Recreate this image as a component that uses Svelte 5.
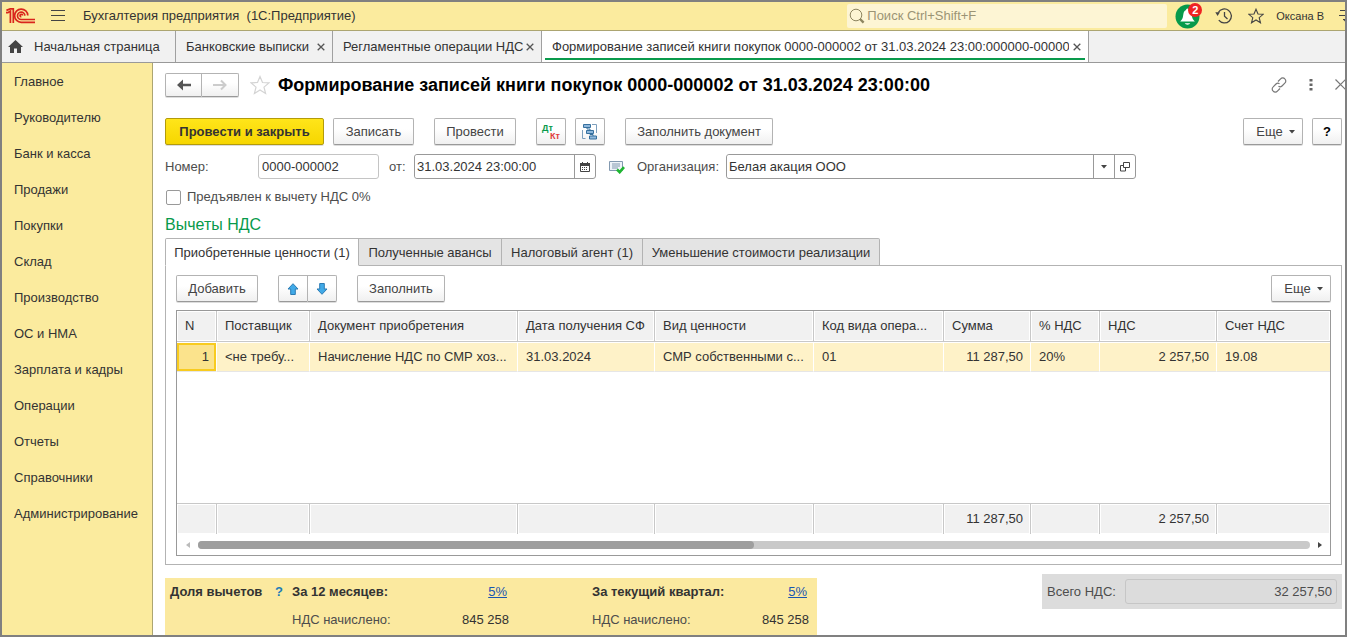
<script lang="ts">
  type Column = {
    title: string;
    width: number;
    value: string;
    total?: string;
    numeric?: boolean;
  };

  const sections = [
    'Главное',
    'Руководителю',
    'Банк и касса',
    'Продажи',
    'Покупки',
    'Склад',
    'Производство',
    'ОС и НМА',
    'Зарплата и кадры',
    'Операции',
    'Отчеты',
    'Справочники',
    'Администрирование'
  ];

  const columns: Column[] = [
    { title: 'N', width: 40, value: '1', numeric: true },
    { title: 'Поставщик', width: 93, value: '<не требу...' },
    { title: 'Документ приобретения', width: 208, value: 'Начисление НДС по СМР хоз...' },
    { title: 'Дата получения СФ', width: 137, value: '31.03.2024' },
    { title: 'Вид ценности', width: 159, value: 'СМР собственными с...' },
    { title: 'Код вида опера...', width: 130, value: '01' },
    { title: 'Сумма', width: 87, value: '11 287,50', total: '11 287,50', numeric: true },
    { title: '% НДС', width: 69, value: '20%' },
    { title: 'НДС', width: 117, value: '2 257,50', total: '2 257,50', numeric: true },
    { title: 'Счет НДС', width: 0, value: '19.08' }
  ];

  const pages = [
    'Приобретенные ценности (1)',
    'Полученные авансы',
    'Налоговый агент (1)',
    'Уменьшение стоимости реализации'
  ];

  const shares = [
    { period: 'За 12 месяцев:', percent: '5%', accrued: '845 258' },
    { period: 'За текущий квартал:', percent: '5%', accrued: '845 258' }
  ];

  let activePage = $state(0);
  let zeroRate = $state(false);
  let docNumber = $state('0000-000002');
  let docDate = $state('31.03.2024 23:00:00');
  let organization = $state('Белая акация ООО');
</script>

{#snippet cross()}
  <svg width="8" height="8" viewBox="0 0 8 8"><path d="M.7.7l6.6 6.6M7.3.7L.7 7.3" stroke="#555" stroke-width="1.3" /></svg>
{/snippet}

{#snippet caret()}
  <svg width="6" height="4" viewBox="0 0 6 4"><path d="M0 0h6L3 3.5z" fill="#444" /></svg>
{/snippet}

<div class="window">
  <header class="topbar">
    <svg class="logo" width="30" height="16" viewBox="0 0 30 16" fill="none" stroke="#d9251c" stroke-width="1.7">
      <path d="M0 4.600h1.900L4.400 3V15" />
      <path d="M.4 2.400L4.200 .9H7.300V15" />
      <path d="M21.800 7.600A6.600 6.600 0 1 0 15.300 14.300H29" />
      <path d="M18.900 7.600A3.700 3.700 0 1 0 15.300 11.500H29" />
      <path d="M16.600 7.600A1.300 1.300 0 1 0 15.300 8.900" />
    </svg>
    <button class="icon" aria-label="Меню">
      <svg width="14" height="12" viewBox="0 0 14 12"><path d="M0 .5h14M0 5.5h14M0 10.5h14" stroke="#444" /></svg>
    </button>
    <span class="app-name">Бухгалтерия предприятия&nbsp; (1С:Предприятие)</span>
    <label class="search">
      <svg width="16" height="16" viewBox="0 0 16 16" fill="none" stroke="#8d8560">
        <circle cx="7" cy="7" r="5.8" />
        <path d="M11 11l3.6 3.6" stroke-width="2.4" />
      </svg>
      <input type="search" placeholder="Поиск Ctrl+Shift+F" aria-label="Поиск" />
    </label>
    <button class="icon bell" aria-label="Оповещения">
      <svg width="25" height="25" viewBox="0 0 25 25">
        <circle cx="12.5" cy="12.5" r="12" fill="#079a4b" />
        <path d="M12.5 4.5c-1 0-1.4.8-1.4 1.6C8.5 7 8.5 10 8 12.5c-.4 2-1.2 3.500-2.800 5h14.600c-1.600-1.500-2.400-3-2.800-5-.5-2.500-.5-5.500-3.100-6.400 0-.8-.4-1.600-1.400-1.600zM9.700 19.300a3 2.200 0 0 0 5.600 0z" fill="#fff" />
      </svg>
      <span class="badge">2</span>
    </button>
    <button class="icon" aria-label="История">
      <svg width="18" height="16" viewBox="0 0 18 16" fill="none" stroke="#444" stroke-width="1.3">
        <path d="M3.300 4.500A7 7 0 1 1 3.800 12.200" />
        <path d="M9.500 4v4.300l3 2.600" />
        <path d="M.3 4.300h4.600L2.600 8z" fill="#444" stroke="none" />
      </svg>
    </button>
    <button class="icon" aria-label="Избранное">
      <svg width="16" height="16" viewBox="0 0 16 16"><path d="M8 1.200l2 4.800 5.200.3-4 3.400 1.300 5.100L8 12l-4.500 2.800 1.300-5.100-4-3.400L6 6z" fill="none" stroke="#444" stroke-width="1.100" /></svg>
    </button>
    <span class="user">Оксана В</span>
    <button class="icon" aria-label="Настройки">
      <svg width="14" height="14" viewBox="0 0 14 14"><path d="M1 1.500h12M0 6.500h14M4 10.500h8" stroke="#444" /><path d="M4 10.500h6l-3 3z" fill="#444" /></svg>
    </button>
  </header>

  <nav class="tabs" aria-label="Открытые окна">
    <div class="tab home">
      <svg width="15" height="13" viewBox="0 0 15 13"><path d="M7.500 0L0 7h2v6h4V8.500h3V13h4V7h2z" fill="#444" /></svg>
      <span>Начальная страница</span>
    </div>
    <div class="tab bank"><span>Банковские выписки</span><button class="icon" aria-label="Закрыть">{@render cross()}</button></div>
    <div class="tab routine"><span>Регламентные операции НДС</span><button class="icon" aria-label="Закрыть">{@render cross()}</button></div>
    <div class="tab current">
      <span>Формирование записей книги покупок 0000-000002 от 31.03.2024 23:00:000000-000002</span>
      <button class="icon" aria-label="Закрыть">{@render cross()}</button>
    </div>
  </nav>

  <div class="body">
    <nav class="sections" aria-label="Разделы">
      {#each sections as section}
        <a href="#section">{section}</a>
      {/each}
    </nav>

    <main>
      <div class="title-row">
        <div class="pair">
          <button class="btn" aria-label="Назад">
            <svg width="16" height="12" viewBox="0 0 16 12"><path d="M1 6l6-5.500v4.300h8v2.400H7v4.300z" fill="#555" /></svg>
          </button>
          <button class="btn" aria-label="Вперед">
            <svg width="16" height="12" viewBox="0 0 16 12"><path d="M9 1.500L13.500 6 9 10.500M13 6H1" fill="none" stroke="#ccc" stroke-width="2" /></svg>
          </button>
        </div>
        <button class="icon star" aria-label="В избранное">
          <svg width="20" height="20" viewBox="0 0 20 20"><path d="M10 1.500l2.500 6 6.500.4-5 4.200 1.600 6.400L10 15l-5.600 3.500L6 12.100 1 7.900l6.500-.4z" fill="none" stroke="#d4d4d4" stroke-width="1.200" /></svg>
        </button>
        <h1>Формирование записей книги покупок 0000-000002 от 31.03.2024 23:00:00</h1>
        <div class="title-tools">
          <button class="icon" aria-label="Ссылка">
            <svg width="16" height="16" viewBox="0 0 16 16" fill="none" stroke="#777" stroke-width="1.200">
              <path d="M7 4.500l2.600-2.600a2.700 2.700 0 0 1 4.200 0 2.700 2.700 0 0 1 0 4.200L11 9a2.700 2.700 0 0 1-3.500.3" />
              <path d="M9 11.500l-2.600 2.600a2.700 2.700 0 0 1-4.200 0 2.700 2.700 0 0 1 0-4.200L5 7a2.700 2.700 0 0 1 3.500-.3" />
            </svg>
          </button>
          <button class="icon" aria-label="Действия">
            <svg width="4" height="12" viewBox="0 0 4 12" fill="#666"><path d="M.5 0h3v2.500h-3zM.5 4.500h3V7h-3zM.5 9h3v2.500h-3z" /></svg>
          </button>
          <button class="icon" aria-label="Закрыть">
            <svg width="11" height="11" viewBox="0 0 11 11"><path d="M.5.5l10 10M10.500.5l-10 10" stroke="#777" stroke-width="1.200" /></svg>
          </button>
        </div>
      </div>

      <div class="toolbar commands">
        <button class="btn primary">Провести и закрыть</button>
        <button class="btn save">Записать</button>
        <button class="btn post gap">Провести</button>
        <button class="btn square gap" aria-label="Проводки">
          <span class="entries"><b>Дт</b><b>Кт</b></span>
        </button>
        <button class="btn square" aria-label="Структура подчиненности">
          <svg width="16" height="16" viewBox="0 0 16 16" fill="#8fb8dc" stroke="#36709f">
            <path d="M.5 6v8.500h3M10 .5h4.500V9" fill="none" stroke="#7d9fbd" />
            <path d="M1.500.5h7v3h-7zM4.500 6.500h7v3h-7zM7.500 12h7v3h-7z" />
            <path d="M5 3.500v1.500h3v1.500M8 9.500v1h3V12" fill="none" />
          </svg>
        </button>
        <button class="btn gap fill-doc">Заполнить документ</button>
        <button class="btn more push">Еще {@render caret()}</button>
        <button class="btn square help">?</button>
      </div>

      <div class="fields">
        <label class="caption" for="number">Номер:</label>
        <input id="number" class="number" bind:value={docNumber} />
        <label class="from" for="date">от:</label>
        <div class="combo date">
          <input id="date" bind:value={docDate} />
          <button aria-label="Календарь">
            <svg width="10" height="10" viewBox="0 0 10 10"><path d="M.5 1.500h9v8h-9z" fill="none" stroke="#444" /><path d="M0 1h10v3H0zM2 0h1v1H2zM7 0h1v1H7zM2 5h1v1H2zM4 5h1v1H4zM6 5h1v1H6zM2 7h1v1H2zM4 7h1v1H4zM6 7h1v1H6z" fill="#444" /></svg>
          </button>
        </div>
        <svg class="posted" width="16" height="14" viewBox="0 0 16 14">
          <path d="M.5 1.500h13v9H.5z" fill="#eef3f8" stroke="#8299b0" />
          <path d="M3 4h8M3 6h8M3 8h6" stroke="#8299b0" />
          <path d="M8 9.500l2.700 2.700 4.300-5" fill="none" stroke="#1fb632" stroke-width="2.600" />
        </svg>
        <label class="org-caption" for="org">Организация:</label>
        <div class="combo org">
          <input id="org" bind:value={organization} />
          <button aria-label="Выбрать">{@render caret()}</button>
          <button aria-label="Открыть">
            <svg width="10" height="10" viewBox="0 0 10 10"><path d="M3.500.5h6v5h-6zM3.500 3.500h-3v5.500h5V6" fill="none" stroke="#444" /></svg>
          </button>
        </div>
      </div>

      <label class="check"><input type="checkbox" bind:checked={zeroRate} />Предъявлен к вычету НДС 0%</label>

      <h2>Вычеты НДС</h2>

      <div class="pages" role="tablist">
        {#each pages as page, i}
          <button role="tab" class="page" class:active={i === activePage} aria-selected={i === activePage} onclick={() => (activePage = i)}>
            {page}
          </button>
        {/each}
      </div>

      <section class="panel">
        <div class="toolbar">
          <button class="btn add">Добавить</button>
          <div class="pair gap">
            <button class="btn" aria-label="Вверх">
              <svg width="12" height="12" viewBox="0 0 12 12"><path d="M6 .7l5 5.300H8.300v5.500H3.700V6H1z" fill="#41aae8" stroke="#2c7cb4" /></svg>
            </button>
            <button class="btn" aria-label="Вниз">
              <svg width="12" height="12" viewBox="0 0 12 12"><path d="M6 11.300L1 6h2.700V.5h4.600V6H11z" fill="#41aae8" stroke="#2c7cb4" /></svg>
            </button>
          </div>
          <button class="btn gap fill">Заполнить</button>
          <button class="btn more push">Еще {@render caret()}</button>
        </div>

        <div class="grid">
          <table>
            <colgroup>
              {#each columns as column}
                <col style:width={column.width ? `${column.width}px` : 'auto'} />
              {/each}
            </colgroup>
            <thead>
              <tr>
                {#each columns as column}
                  <th>{column.title}</th>
                {/each}
              </tr>
            </thead>
            <tbody>
              <tr>
                {#each columns as column, i}
                  <td class:numeric={column.numeric} class:selected={i === 0}>{column.value}</td>
                {/each}
              </tr>
              <tr class="empty"><td colspan={columns.length}></td></tr>
            </tbody>
            <tfoot>
              <tr>
                {#each columns as column}
                  <td class:numeric={column.numeric}>{column.total ?? ''}</td>
                {/each}
              </tr>
            </tfoot>
          </table>
          <div class="scroll">
            <svg width="4" height="6" viewBox="0 0 4 6"><path d="M4 0v6L0 3z" fill="#bbb" /></svg>
            <div class="track"><div class="thumb"></div></div>
            <svg width="4" height="6" viewBox="0 0 4 6"><path d="M0 0v6l4-3z" fill="#444" /></svg>
          </div>
        </div>
      </section>

      <div class="summary">
        <div class="shares">
          <div class="share-title"><b>Доля вычетов</b><a href="#help">?</a></div>
          {#each shares as share}
            <div class="share">
              <b>{share.period}</b>
              <a href="#percent">{share.percent}</a>
              <span>НДС начислено:</span>
              <span class="amount">{share.accrued}</span>
            </div>
          {/each}
        </div>
        <div class="total">
          <label for="total">Всего НДС:</label>
          <input id="total" readonly value="32 257,50" />
        </div>
      </div>
    </main>
  </div>
</div>

<style>
  :global(body) {
    overflow: hidden;
  }

  .window {
    display: flex;
    flex-direction: column;
    height: 100vh;
    box-sizing: border-box;
    border: 2px solid #808080;
    overflow: hidden;
    background: #fff;
    color: #333;
    font: 13px/16px 'Liberation Sans', Arial, sans-serif;
    white-space: nowrap;
  }

  .window :is(*, *::before) {
    box-sizing: border-box;
  }

  svg {
    display: block;
    flex: none;
  }

  button,
  input {
    margin: 0;
    font: inherit;
    color: inherit;
  }

  button {
    display: flex;
    align-items: center;
    justify-content: center;
    padding: 0;
  }

  .icon {
    flex: none;
    background: none;
    border: 0;
  }

  /* top bar */
  .topbar {
    display: flex;
    align-items: center;
    flex: none;
    height: 29px;
    padding-left: 4px;
    background: #fbeb9e;
    border-bottom: 1px solid #aca571;
  }

  .topbar > .icon {
    margin-left: 15px;
  }

  .app-name {
    margin: 0 auto 0 18px;
  }

  .search {
    display: flex;
    align-items: center;
    width: 320px;
    height: 24px;
    padding-left: 2px;
    background: #fdf5d4;
    border-radius: 2px;

    input {
      flex: 1;
      min-width: 0;
      padding: 0 2px;
      border: 0;
      outline: 0;
      background: none;
    }

    input::placeholder {
      color: #9b9474;
      opacity: 1;
    }
  }

  .topbar > .bell {
    position: relative;
    margin-left: 8px;
  }

  .badge {
    position: absolute;
    top: -1px;
    right: -2px;
    width: 14px;
    height: 14px;
    border-radius: 7px;
    background: #ee2222;
    color: #fff;
    font: bold 11px/14px 'Liberation Sans', Arial, sans-serif;
    text-align: center;
  }

  .user {
    margin-left: 12px;
    font-size: 11px;
  }

  .topbar > .icon:last-child {
    margin-right: -8px;
  }

  /* open windows */
  .tabs {
    display: flex;
    flex: none;
    height: 32px;
    background: #f1f1f1;
    border-bottom: 1px solid #999;
  }

  .tab {
    display: flex;
    align-items: center;
    justify-content: space-between;
    padding: 0 7px 0 10px;
    border-right: 1px solid #a0a0a0;

    span {
      overflow: hidden;
    }
  }

  .home {
    width: 174px;
    gap: 11px;
    padding-left: 6px;
    justify-content: flex-start;
  }

  .bank {
    width: 157px;
  }

  .routine {
    width: 209px;
  }

  .current {
    position: relative;
    gap: 4px;
    width: 547px;
    background: #fff;
  }

  .current::before {
    content: '';
    position: absolute;
    left: 3px;
    right: 3px;
    bottom: 2px;
    height: 2px;
    background: #0a9a4c;
  }

  .body {
    display: flex;
    flex: 1;
    min-height: 0;
  }

  .sections {
    display: flex;
    flex-direction: column;
    flex: none;
    gap: 20px;
    width: 151px;
    padding: 11px 12px;
    background: #fbeb9e;
    border-right: 1px solid #aca571;

    a {
      color: #333;
      text-decoration: none;
    }
  }

  main {
    flex: 1;
    min-width: 0;
    padding: 9px 3px 0 12px;
  }

  .title-row {
    display: flex;
    align-items: center;
    height: 25px;
  }

  h1 {
    margin: 0 auto 0 8px;
    color: #000;
    font-size: 18px;
    line-height: 24px;
  }

  .star {
    margin-left: 11px;
  }

  .title-tools {
    display: flex;
    align-items: center;
    gap: 22px;
    margin-right: -4px;
  }

  /* buttons */
  .btn {
    height: 27px;
    background: linear-gradient(#fff 40%, #f0f0f0);
    border: 1px solid #b3b3b3;
    border-bottom-color: #999;
    border-radius: 2px;
    color: #444;
    box-shadow: 0 1px 0 #ddd;
  }

  .pair {
    display: flex;
  }

  .pair .btn:first-child {
    width: 30px;
    border-radius: 2px 0 0 2px;
  }

  .pair .btn:last-child {
    width: 29px;
    border-left: 0;
    border-radius: 0 2px 2px 0;
  }

  .title-row .pair .btn {
    width: 37px;
    height: 24px;
  }

  .toolbar {
    display: flex;
    gap: 9px;
  }

  .commands {
    margin-top: 21px;
  }

  .toolbar .gap {
    margin-left: 11px;
  }

  .toolbar .push {
    margin-left: auto;
  }

  .primary {
    width: 159px;
    background: linear-gradient(#ffe51a, #f6d600);
    border-color: #b39b0a;
    color: #333;
    font-weight: bold;
  }

  .save {
    width: 81px;
  }

  .post,
  .add {
    width: 82px;
  }

  .square {
    width: 30px;
  }

  .fill-doc {
    width: 148px;
  }

  .fill {
    width: 88px;
  }

  .more {
    gap: 6px;
    width: 60px;
    padding-left: 5px;
  }

  .help {
    color: #000;
    font-weight: bold;
  }

  .entries {
    display: flex;
    flex-direction: column;
    width: 18px;
    font-size: 9px;
    line-height: 8px;
    text-align: left;
    color: #079a4b;

    b + b {
      color: #e03c3c;
      text-align: right;
    }
  }

  /* document fields */
  .fields {
    display: flex;
    align-items: center;
    margin-top: 9px;
    color: #4d4d4d;
  }

  .caption {
    width: 93px;
  }

  .fields input {
    height: 25px;
    padding: 0 3px;
    border: 1px solid #999;
    border-radius: 3px;
    outline: 0;
    color: #333;
  }

  .fields .number {
    width: 121px;
    border-color: #c4c4c4;
  }

  .from {
    width: 35px;
    padding-left: 10px;
  }

  .combo {
    display: flex;
    border: 1px solid #999;
    border-radius: 3px;

    input {
      flex: 1;
      min-width: 0;
      height: 23px;
      padding: 0 2px;
      border: 0;
    }

    button {
      width: 21px;
      background: none;
      border: 0;
      border-left: 1px solid #999;
    }
  }

  .date {
    width: 182px;
  }

  .posted {
    margin: 0 12px 0 13px;
  }

  .org-caption {
    width: 89px;
  }

  .org {
    width: 410px;
  }

  .check {
    display: flex;
    align-items: center;
    gap: 6px;
    width: max-content;
    margin-top: 10px;
    color: #4d4d4d;

    input {
      appearance: none;
      width: 15px;
      height: 15px;
      margin-left: 1px;
      border: 1px solid #999;
      border-radius: 2px;
    }

    input:checked {
      background: #079a4b;
    }
  }

  h2 {
    margin: 10px 0 3px;
    color: #079a4b;
    font-size: 16px;
    font-weight: normal;
    line-height: 20px;
  }

  /* pages */
  .pages {
    position: relative;
    display: flex;
  }

  .page {
    height: 28px;
    padding: 1px 0 0;
    background: #e4e4e4;
    border: 1px solid #b3b3b3;
    border-left: 0;
    color: #333;
  }

  .page:first-child {
    width: 194px;
    border-left: 1px solid #b3b3b3;
    border-radius: 2px 0 0 0;
  }

  .page:nth-child(2) {
    width: 143px;
  }

  .page:nth-child(3) {
    width: 141px;
  }

  .page:last-child {
    width: 237px;
    border-radius: 0 2px 0 0;
  }

  .page.active {
    background: #fff;
    border-bottom-color: #fff;
  }

  .panel {
    margin-top: -1px;
    padding: 9px 10px 8px;
    border: 1px solid #b3b3b3;
  }

  .grid {
    margin-top: 8px;
    border: 1px solid #999;
  }

  table {
    width: 100%;
    height: 223px;
    table-layout: fixed;
    border-collapse: separate;
    border-spacing: 0;
  }

  th,
  td {
    padding: 0 8px;
    overflow: hidden;
    text-align: left;
    font-weight: normal;
  }

  th,
  tfoot td {
    height: 31px;
    background: #f1f1f1;
    border-right: 1px solid #c8c8c8;
    box-shadow: inset 0 0 0 1px #fff;
  }

  th {
    border-bottom: 1px solid #c8c8c8;
  }

  tfoot td {
    border-top: 1px solid #c8c8c8;
  }

  tbody td {
    height: 30px;
    background: #fef2c8;
    border: 1px solid #fff;
    border-width: 1px 1px 1px 0;
    border-bottom-color: #e6e6e6;
  }

  tr > :last-child {
    border-right: 0;
  }

  td.numeric {
    padding-right: 7px;
    text-align: right;
  }

  td.selected {
    background: #fbe38c;
    box-shadow: inset 0 0 0 2px #f8cb1f;
  }

  .empty td {
    height: auto;
    background: #fff;
    border: 0;
  }

  .scroll {
    display: flex;
    align-items: center;
    gap: 8px;
    height: 21px;
    padding: 0 8px 0 9px;
  }

  .track {
    flex: 1;
    height: 8px;
    background: #c9c9c9;
    border-radius: 4px;
  }

  .thumb {
    width: 50%;
    height: 8px;
    background: #9e9e9e;
    border-radius: 4px;
  }

  /* deduction summary */
  .summary {
    display: flex;
    align-items: flex-start;
    justify-content: space-between;
    margin-top: 9px;
  }

  .shares {
    display: flex;
    width: 652px;
    height: 62px;
    margin-top: 4px;
    padding: 6px 8px 0 5px;
    background: #fbe99f;
  }

  .share-title {
    display: flex;
    align-items: flex-start;
    justify-content: space-between;
    width: 122px;
    padding-right: 9px;

    a {
      color: #1c7cb8;
      font-weight: bold;
      text-decoration: none;
    }
  }

  .share {
    display: grid;
    grid-template-columns: 1fr auto;
    align-content: start;
    row-gap: 12px;
    width: 217px;
    color: #4d4d4d;

    b,
    .amount {
      color: #333;
    }

    a {
      justify-self: end;
      padding-right: 2px;
      color: #1a56b0;
    }
  }

  .share + .share {
    margin-left: 83px;
  }

  .total {
    display: flex;
    align-items: center;
    gap: 9px;
    width: 300px;
    height: 35px;
    padding: 0 5px;
    background: #dcdcdc;
    color: #4d4d4d;

    input {
      flex: 1;
      min-width: 0;
      height: 25px;
      padding: 0 4px;
      border: 1px solid #c6c6c6;
      border-radius: 3px;
      outline: 0;
      background: none;
      text-align: right;
    }
  }
</style>
